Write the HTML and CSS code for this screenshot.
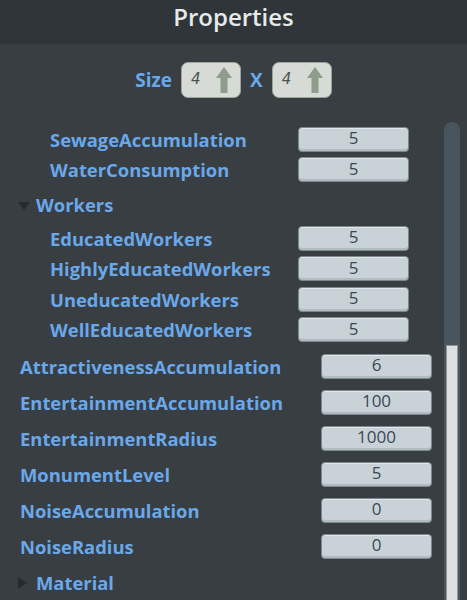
FILE: index.html
```html
<!DOCTYPE html>
<html>
<head>
<meta charset="utf-8">
<link rel="stylesheet" href="styles.css">
</head>
<body>
<div class="panel">
  <div class="header">Properties</div>
  <div class="size-row">
    <span class="size-label">Size</span>
    <div class="size-box"><span class="size-val">4</span><svg class="arrow" width="18" height="28" viewBox="0 0 18 28"><path d="M9 1 L17 12 L12.5 12 L12.5 27 L5.5 27 L5.5 12 L1 12 Z" fill="#8f9b8b"/></svg></div>
    <span class="size-label x">X</span>
    <div class="size-box"><span class="size-val">4</span><svg class="arrow" width="18" height="28" viewBox="0 0 18 28"><path d="M9 1 L17 12 L12.5 12 L12.5 27 L5.5 27 L5.5 12 L1 12 Z" fill="#8f9b8b"/></svg></div>
  </div>
  <div class="body">
    <div class="list">
      <div class="row nested"><span class="label">SewageAccumulation</span><span class="input">5</span></div>
      <div class="row nested"><span class="label">WaterConsumption</span><span class="input">5</span></div>
      <div class="group"><span class="tri down"></span><span class="label">Workers</span></div>
      <div class="row nested"><span class="label">EducatedWorkers</span><span class="input">5</span></div>
      <div class="row nested"><span class="label">HighlyEducatedWorkers</span><span class="input">5</span></div>
      <div class="row nested"><span class="label">UneducatedWorkers</span><span class="input">5</span></div>
      <div class="row nested"><span class="label">WellEducatedWorkers</span><span class="input">5</span></div>
      <div class="row top first"><span class="label">AttractivenessAccumulation</span><span class="input">6</span></div>
      <div class="row top"><span class="label">EntertainmentAccumulation</span><span class="input">100</span></div>
      <div class="row top"><span class="label">EntertainmentRadius</span><span class="input">1000</span></div>
      <div class="row top"><span class="label">MonumentLevel</span><span class="input">5</span></div>
      <div class="row top"><span class="label">NoiseAccumulation</span><span class="input">0</span></div>
      <div class="row top"><span class="label">NoiseRadius</span><span class="input">0</span></div>
      <div class="group material"><span class="tri right"></span><span class="label">Material</span></div>
    </div>
    <div class="scrollbar"><div class="thumb"></div></div>
  </div>
</div>
</body>
</html>
```

FILE: styles.css
```css
html, body {
  margin: 0;
  padding: 0;
}
body {
  width: 467px;
  height: 600px;
  overflow: hidden;
  background: #383e41;
  font-family: "Open Sans", "DejaVu Sans", sans-serif;
}
.panel {
  display: flex;
  flex-direction: column;
  height: 600px;
}
.header {
  height: 44px;
  background: #2f3538;
  color: #e6eaea;
  font-size: 24px;
  font-weight: 600;
  display: flex;
  align-items: center;
  justify-content: center;
  line-height: 1;
  padding-bottom: 10px;
  box-sizing: border-box;
}
.size-row {
  display: flex;
  align-items: center;
  justify-content: center;
  margin-top: 18px;
  height: 36px;
  gap: 8px;
}
.size-label {
  color: #6aa8ea;
  font-weight: 700;
  font-size: 19px;
  margin-right: 1px;
}
.size-label.x {
  margin: 0 1px;
}
.size-box {
  width: 60px;
  height: 36px;
  box-sizing: border-box;
  background: #d7dbd6;
  border: 1px solid #9aa29a;
  border-radius: 7px;
  display: flex;
  align-items: center;
  justify-content: space-between;
  padding: 0 7px 0 9px;
}
.size-val {
  color: #4c5450;
  font-family: "DejaVu Sans", sans-serif;
  font-size: 15px;
  font-style: italic;
  margin-top: -2px;
}
.arrow {
  display: block;
}
.body {
  display: flex;
  flex: 1;
}
.list {
  flex: 1;
  display: flex;
  flex-direction: column;
  padding-top: 26px;
}
.row {
  display: flex;
  align-items: center;
}
.row.nested {
  height: 30.5px;
  padding-left: 50px;
  padding-right: 31px;
}
.row.top {
  height: 36px;
  padding-left: 20px;
  padding-right: 8px;
}
.row.top.first {
  margin-top: 3px;
}
.label {
  color: #6aa8ea;
  font-weight: 700;
  font-size: 18.4px;
  white-space: nowrap;
}
.input {
  margin-left: auto;
  width: 111px;
  height: 25px;
  box-sizing: border-box;
  background: #c9d3d7;
  border: 1px solid #7d888e;
  border-radius: 4px;
  box-shadow: inset 0 1px 0 #e2e8ea, inset 0 -2px 0 #b3bdc1;
  color: #3b4756;
  font-size: 17px;
  display: flex;
  align-items: center;
  justify-content: center;
  line-height: 1;
  padding-bottom: 3px;
}
.group {
  display: flex;
  align-items: center;
  height: 38px;
  padding-left: 18px;
}
.group .label {
  margin-left: 6px;
}
.group.material {
  height: 36px;
}
.tri {
  display: block;
  width: 0;
  height: 0;
}
.tri.down {
  border-left: 6px solid transparent;
  border-right: 6px solid transparent;
  border-top: 8px solid #262b2d;
  margin-top: 4px;
}
.tri.right {
  border-top: 6px solid transparent;
  border-bottom: 6px solid transparent;
  border-left: 9px solid #262b2d;
  margin-top: 2px;
  margin-right: 3px;
}
.scrollbar {
  width: 16px;
  margin-right: 7px;
  margin-left: 4px;
  margin-top: 24px;
  background: #49555c;
  border-radius: 8px 8px 0 0;
  display: flex;
  flex-direction: column;
  justify-content: flex-end;
}
.thumb {
  height: 255px;
  margin: 0 2px;
  background: #dde0e1;
  border: 1px solid #8d9699;
  border-bottom: none;
  box-sizing: border-box;
}
```
